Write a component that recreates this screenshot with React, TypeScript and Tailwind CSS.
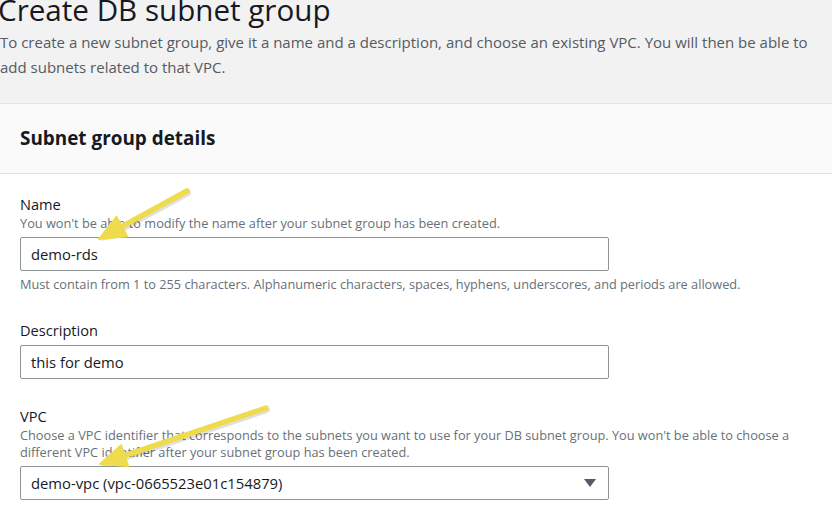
import React from 'react';

const font = { fontFamily: '"Open Sans", "Noto Sans", Arial, sans-serif' };

const Arrow = ({ x1, y1, x2, y2 }: { x1: number; y1: number; x2: number; y2: number }) => {
  // shaft from tail (x1,y1) to head tip (x2,y2)
  const dx = x2 - x1;
  const dy = y2 - y1;
  const len = Math.sqrt(dx * dx + dy * dy);
  const ux = dx / len;
  const uy = dy / len;
  const hl = 26;
  const hw = 11;
  const bx = x2 - ux * hl;
  const by = y2 - uy * hl;
  const p1 = `${bx - uy * hw},${by + ux * hw}`;
  const p2 = `${bx + uy * hw},${by - ux * hw}`;
  return (
    <g>
      <line x1={x1 + 1} y1={y1 + 2} x2={bx + 1} y2={by + 2} stroke="rgba(0,0,0,0.12)" strokeWidth={6} strokeLinecap="round" />
      <polygon points={`${x2 + 1},${y2 + 2} ${p1} ${p2}`} fill="rgba(0,0,0,0.12)" />
      <line x1={x1} y1={y1} x2={bx} y2={by} stroke="#eedc4e" strokeWidth={5.5} strokeLinecap="round" />
      <polygon points={`${x2},${y2} ${p1} ${p2}`} fill="#eedc4e" strokeLinejoin="round" stroke="#eedc4e" strokeWidth={2} />
    </g>
  );
};

const Field = ({ label, hint, children, after }: { label: string; hint?: React.ReactNode; children: React.ReactNode; after?: string }) => (
  <div className="flex flex-col">
    <div className="text-[14.6px] leading-[20px] text-[#16191f]">{label}</div>
    {hint && <div className="text-[12.75px] leading-[17px] text-[#687078] mt-[1px]">{hint}</div>}
    <div className="mt-[5px]">{children}</div>
    {after && <div className="text-[12.75px] leading-[17px] text-[#687078] mt-[5px]">{after}</div>}
  </div>
);

const Input = ({ value, select }: { value: string; select?: boolean }) => (
  <div className="w-[589px] h-[34px] border border-[#8d9596] rounded-[2px] bg-white flex items-center justify-between pl-[10px] pr-[12px]">
    <span className="text-[14.8px] text-[#16191f]">{value}</span>
    {select && (
      <svg width="12" height="10" viewBox="0 0 12 10">
        <polygon points="0,1 12,1 6,9" fill="#545b64" />
      </svg>
    )}
  </div>
);

export default function App() {
  return (
    <div className="relative w-[832px] h-[518px] overflow-hidden bg-white" style={font}>
      <div className="bg-[#f2f2f2] h-[103px] flex flex-col">
        <h1 className="text-[29.6px] leading-[30px] text-[#16191f] -mt-[5px] ml-[-2px]">Create DB subnet group</h1>
        <p className="text-[15px] leading-[25px] text-[#545b64] mt-[5px] w-[825px]">
          To create a new subnet group, give it a name and a description, and choose an existing VPC. You will then be able to add subnets related to that VPC.
        </p>
      </div>
      <div className="border-t border-[#e5e5e5]">
        <div className="bg-[#fafafa] h-[70px] border-b border-[#e2e2e2] flex items-center px-5">
          <h2 className="text-[18.9px] font-bold text-[#16191f]">Subnet group details</h2>
        </div>
        <div className="px-5 pt-[20px] flex flex-col gap-[27px]">
          <Field
            label="Name"
            hint="You won't be able to modify the name after your subnet group has been created."
            after="Must contain from 1 to 255 characters. Alphanumeric characters, spaces, hyphens, underscores, and periods are allowed."
          >
            <Input value="demo-rds" />
          </Field>
          <Field label="Description">
            <Input value="this for demo" />
          </Field>
          <Field
            label="VPC"
            hint={
              <>
                Choose a VPC identifier that corresponds to the subnets you want to use for your DB subnet group. You won't be able to choose a
                <br />
                different VPC identifier after your subnet group has been created.
              </>
            }
          >
            <Input value="demo-vpc (vpc-0665523e01c154879)" select />
          </Field>
        </div>
      </div>
      <svg className="absolute inset-0 pointer-events-none" width="832" height="518">
        <Arrow x1={187} y1={191} x2={99} y2={239} />
        <Arrow x1={266} y1={408} x2={100} y2={464} />
      </svg>
    </div>
  );
}
